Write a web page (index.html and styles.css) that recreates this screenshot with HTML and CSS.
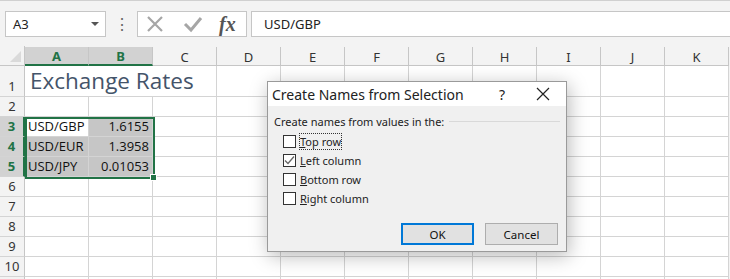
FILE: index.html
```html
<!DOCTYPE html>
<html lang="en">
<head>
    <meta charset="UTF-8">
    <title>Exchange Rates - Create Names from Selection</title>
    <link rel="stylesheet" href="styles.css">
</head>
<body>
    <div class="formula-bar">
        <div class="name-box">
            <span>A3</span>
            <span class="dropdown"></span>
        </div>
        <div class="grip">&#8942;</div>
        <div class="fx-box">
            <svg class="icon" width="20" height="18" viewBox="0 0 20 18">
                <path d="M3 2 L17 16 M17 2 L3 16" stroke="#a6a6a6" stroke-width="2.2" fill="none"/>
            </svg>
            <svg class="icon" width="20" height="18" viewBox="0 0 20 18">
                <path d="M2 9 L8 15 L18 3" stroke="#a6a6a6" stroke-width="3" fill="none"/>
            </svg>
            <span class="fx">fx</span>
        </div>
        <div class="formula-input">USD/GBP</div>
    </div>

    <div class="sheet">
        <div class="corner"></div>
        <div class="col-head active">A</div>
        <div class="col-head active">B</div>
        <div class="col-head">C</div>
        <div class="col-head">D</div>
        <div class="col-head">E</div>
        <div class="col-head">F</div>
        <div class="col-head">G</div>
        <div class="col-head">H</div>
        <div class="col-head">I</div>
        <div class="col-head">J</div>
        <div class="col-head">K</div>

        <div class="row-head">1</div>
        <div class="cell title">Exchange Rates</div>
        <div class="cell"></div><div class="cell"></div><div class="cell"></div><div class="cell"></div><div class="cell"></div><div class="cell"></div><div class="cell"></div><div class="cell"></div>

        <div class="row-head">2</div>
        <div class="cell"></div><div class="cell"></div><div class="cell"></div><div class="cell"></div><div class="cell"></div><div class="cell"></div><div class="cell"></div><div class="cell"></div><div class="cell"></div><div class="cell"></div><div class="cell"></div>

        <div class="row-head active">3</div>
        <div class="cell">USD/GBP</div>
        <div class="cell num sel">1.6155</div>
        <div class="cell"></div><div class="cell"></div><div class="cell"></div><div class="cell"></div><div class="cell"></div><div class="cell"></div><div class="cell"></div><div class="cell"></div><div class="cell"></div>

        <div class="row-head active">4</div>
        <div class="cell sel">USD/EUR</div>
        <div class="cell num sel">1.3958</div>
        <div class="cell"></div><div class="cell"></div><div class="cell"></div><div class="cell"></div><div class="cell"></div><div class="cell"></div><div class="cell"></div><div class="cell"></div><div class="cell"></div>

        <div class="row-head active">5</div>
        <div class="cell sel">USD/JPY</div>
        <div class="cell num sel">0.01053</div>
        <div class="cell"></div><div class="cell"></div><div class="cell"></div><div class="cell"></div><div class="cell"></div><div class="cell"></div><div class="cell"></div><div class="cell"></div><div class="cell"></div>

        <div class="row-head">6</div>
        <div class="cell"></div><div class="cell"></div><div class="cell"></div><div class="cell"></div><div class="cell"></div><div class="cell"></div><div class="cell"></div><div class="cell"></div><div class="cell"></div><div class="cell"></div><div class="cell"></div>

        <div class="row-head">7</div>
        <div class="cell"></div><div class="cell"></div><div class="cell"></div><div class="cell"></div><div class="cell"></div><div class="cell"></div><div class="cell"></div><div class="cell"></div><div class="cell"></div><div class="cell"></div><div class="cell"></div>

        <div class="row-head">8</div>
        <div class="cell"></div><div class="cell"></div><div class="cell"></div><div class="cell"></div><div class="cell"></div><div class="cell"></div><div class="cell"></div><div class="cell"></div><div class="cell"></div><div class="cell"></div><div class="cell"></div>

        <div class="row-head">9</div>
        <div class="cell"></div><div class="cell"></div><div class="cell"></div><div class="cell"></div><div class="cell"></div><div class="cell"></div><div class="cell"></div><div class="cell"></div><div class="cell"></div><div class="cell"></div><div class="cell"></div>

        <div class="row-head">10</div>
        <div class="cell"></div><div class="cell"></div><div class="cell"></div><div class="cell"></div><div class="cell"></div><div class="cell"></div><div class="cell"></div><div class="cell"></div><div class="cell"></div><div class="cell"></div><div class="cell"></div>

        <div class="row-head"></div>
        <div class="cell"></div><div class="cell"></div><div class="cell"></div><div class="cell"></div><div class="cell"></div><div class="cell"></div><div class="cell"></div><div class="cell"></div><div class="cell"></div><div class="cell"></div><div class="cell"></div>

        <!-- selection outline A3:B5 -->
        <div class="selection"><span class="fill-handle"></span></div>
    </div>

    <div class="dialog">
        <div class="dialog-title">
            <span class="title-text">Create Names from Selection</span>
            <span class="help">?</span>
            <svg class="close" width="14" height="14" viewBox="0 0 14 14">
                <path d="M1 1 L13 13 M13 1 L1 13" stroke="#222" stroke-width="1.2" fill="none"/>
            </svg>
        </div>
        <div class="dialog-body">
            <div class="group-label"><span>Create names from values in the:</span><span class="group-line"></span></div>
            <div class="options">
                <label class="option"><span class="box"></span><span class="focus"><u>T</u>op row</span></label>
                <label class="option"><span class="box">
                    <svg width="11" height="11" viewBox="0 0 11 11"><path d="M1 5.5 L4 8.5 L10 1.5" stroke="#666" stroke-width="1.3" fill="none"/></svg>
                </span><span><u>L</u>eft column</span></label>
                <label class="option"><span class="box"></span><span><u>B</u>ottom row</span></label>
                <label class="option"><span class="box"></span><span><u>R</u>ight column</span></label>
            </div>
            <div class="buttons">
                <button class="btn default">OK</button>
                <button class="btn">Cancel</button>
            </div>
        </div>
    </div>
</body>
</html>
```

FILE: styles.css
```css
body {
    margin: 0;
    background: #fff;
    font-family: "Noto Sans", "Open Sans", sans-serif;
    color: #222;
    overflow: hidden;
}
.formula-bar {
    height: 46px;
    box-sizing: border-box;
    background: #f3f3f3;
    border-top: 1px solid #d0d0d0;
    display: flex;
    align-items: flex-start;
    padding: 10px 0 0 5px;
}
.name-box {
    width: 101px;
    height: 26px;
    box-sizing: border-box;
    background: #fff;
    border: 1px solid #c6c6c6;
    display: flex;
    align-items: center;
    justify-content: space-between;
    padding: 0 6px 0 7px;
    font-size: 13px;
}
.dropdown {
    width: 0;
    height: 0;
    border-left: 4px solid transparent;
    border-right: 4px solid transparent;
    border-top: 4px solid #555;
}
.grip {
    width: 31px;
    text-align: center;
    font-size: 16px;
    line-height: 26px;
    color: #666;
}
.fx-box {
    width: 110px;
    height: 26px;
    box-sizing: border-box;
    background: #fff;
    border: 1px solid #c6c6c6;
    display: flex;
    align-items: center;
    padding-left: 7px;
    gap: 18px;
}
.fx {
    font-family: "Liberation Serif", serif;
    font-style: italic;
    font-weight: bold;
    font-size: 20px;
    color: #555;
    margin-left: -2px;
}
.formula-input {
    flex: 1;
    height: 26px;
    box-sizing: border-box;
    margin-left: 4px;
    background: #fff;
    border: 1px solid #c6c6c6;
    border-right: none;
    padding-left: 12px;
    font-size: 13px;
    line-height: 24px;
}
.sheet {
    position: relative;
    display: grid;
    grid-template-columns: 25px repeat(11, 64px);
    grid-template-rows: 20px 31px repeat(10, 20px);
    background: #f3f3f3;
}
.corner {
    position: relative;
    border-right: 1px solid #c6c6c6;
    border-bottom: 1px solid #c6c6c6;
}
.corner::after {
    content: "";
    position: absolute;
    right: 3px;
    bottom: 3px;
    border-left: 11px solid transparent;
    border-bottom: 11px solid #dadada;
}
.col-head {
    box-sizing: border-box;
    border-right: 1px solid #c6c6c6;
    border-bottom: 1px solid #c6c6c6;
    font-size: 13px;
    text-align: center;
    line-height: 20px;
    color: #333;
    margin-top: 1px;
}
.col-head.active {
    background: #d2d2d2;
    color: #217346;
    font-weight: bold;
    border-bottom: 2px solid #217346;
    line-height: 18px;
}
.row-head {
    box-sizing: border-box;
    border-right: 1px solid #c6c6c6;
    border-bottom: 1px solid #d4d4d4;
    font-size: 13px;
    color: #333;
    display: flex;
    align-items: flex-end;
    justify-content: center;
    padding-bottom: 1px;
}
.row-head.active {
    background: #d2d2d2;
    color: #217346;
    font-weight: bold;
    border-right: 2px solid #217346;
}
.cell {
    box-sizing: border-box;
    background: #fff;
    border-right: 1px solid #d4d4d4;
    border-bottom: 1px solid #d4d4d4;
    font-family: "Open Sans", sans-serif;
    font-size: 13px;
    display: flex;
    align-items: flex-end;
    padding: 0 3px 1px 3px;
    white-space: nowrap;
    color: #111;
}
.cell.title {
    grid-column: span 3;
    font-family: "Open Sans", sans-serif;
    font-size: 22.5px;
    color: #44546a;
    padding-left: 5px;
    padding-bottom: 0;
}
.cell.num {
    justify-content: flex-end;
}
.cell.sel {
    background: #c6c6c6;
}
.selection {
    position: absolute;
    left: 25px;
    top: 71px;
    width: 130px;
    height: 62px;
    box-sizing: border-box;
    border: 2px solid #217346;
}
.fill-handle {
    position: absolute;
    right: -4px;
    bottom: -4px;
    width: 5px;
    height: 5px;
    background: #217346;
    border: 1px solid #fff;
}
.dialog {
    position: absolute;
    left: 267px;
    top: 81px;
    width: 300px;
    height: 171px;
    box-sizing: border-box;
    border: 1px solid #9a9a9a;
    background: #f0f0f0;
    box-shadow: 2px 4px 18px rgba(0, 0, 0, 0.28);
    display: flex;
    flex-direction: column;
}
.dialog-title {
    height: 24px;
    background: #fff;
    display: flex;
    align-items: center;
    padding-left: 4px;
    font-size: 14px;
}
.title-text {
    flex: 1;
    color: #222;
}
.help {
    font-size: 14px;
    margin-right: 31px;
}
.close {
    margin-right: 16px;
}
.dialog-body {
    flex: 1;
    padding: 8px 6px 0 6px;
    font-size: 11px;
}
.group-label {
    display: flex;
    align-items: center;
    gap: 5px;
}
.group-line {
    flex: 1;
    height: 1px;
    background: #d9d9d9;
}
.options {
    display: flex;
    flex-direction: column;
    gap: 6px;
    padding: 6px 0 0 9px;
}
.option {
    display: flex;
    align-items: center;
    gap: 4px;
    height: 13px;
}
.box {
    width: 13px;
    height: 13px;
    box-sizing: border-box;
    border: 1px solid #333;
    background: #fff;
    display: flex;
    align-items: center;
    justify-content: center;
}
.focus {
    outline: 1px dotted #333;
    outline-offset: 0;
}
.buttons {
    display: flex;
    justify-content: flex-end;
    gap: 11px;
    padding: 18px 2px 0 0;
}
.btn {
    width: 73px;
    height: 22px;
    box-sizing: border-box;
    background: #e1e1e1;
    border: 1px solid #adadad;
    font-family: "Noto Sans", sans-serif;
    font-size: 11.5px;
    color: #111;
    padding: 0;
}
.btn.default {
    border: 2px solid #0078d7;
}
```
